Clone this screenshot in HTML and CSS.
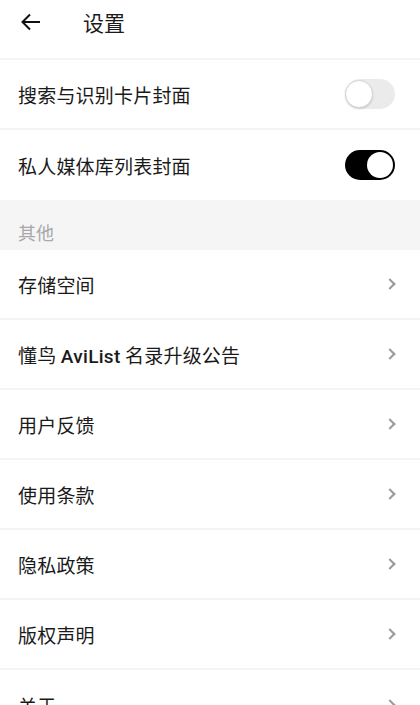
FILE: index.html
```html
<!DOCTYPE html>
<html lang="zh">
<head>
<meta charset="utf-8">
<link rel="stylesheet" href="styles.css">
</head>
<body>
<div class="page">
  <header class="topbar">
    <svg class="back" width="24" height="24" viewBox="0 0 24 24"><path d="M21 12H4M11 4.5L3.5 12 11 19.5" fill="none" stroke="#111" stroke-width="2"/></svg>
    <span class="title">设置</span>
  </header>
  <div class="row bordered"><span class="label">搜索与识别卡片封面</span><span class="switch"><span class="knob"></span></span></div>
  <div class="row"><span class="label">私人媒体库列表封面</span><span class="switch on"><span class="knob"></span></span></div>
  <div class="section">其他</div>
  <div class="row bordered"><span class="label">存储空间</span><span class="chev"></span></div>
  <div class="row bordered"><span class="label">懂鸟 <b class="latin">AviList</b> 名录升级公告</span><span class="chev"></span></div>
  <div class="row bordered"><span class="label">用户反馈</span><span class="chev"></span></div>
  <div class="row bordered"><span class="label">使用条款</span><span class="chev"></span></div>
  <div class="row bordered"><span class="label">隐私政策</span><span class="chev"></span></div>
  <div class="row bordered"><span class="label">版权声明</span><span class="chev"></span></div>
  <div class="row"><span class="label">关于</span><span class="chev"></span></div>
</div>
</body>
</html>
```
FILE: styles.css
```css
html, body { margin: 0; padding: 0; background: #fff; }
body { font-family: "Noto Sans CJK SC", "Noto Sans", sans-serif; color: #1a1a1a; overflow: hidden; }
.page { width: 420px; }
.topbar { height: 44px; padding-bottom: 14px; border-bottom: 2px solid #f4f4f4; display: flex; align-items: center; }
.back { margin-left: 19px; width: 24px; height: 24px; }
.title { margin-left: 40px; font-size: 21px; color: #1a1a1a; }
.row { height: 70px; box-sizing: border-box; display: flex; align-items: center; justify-content: space-between; padding: 0 22px 0 18px; }
.row.bordered { border-bottom: 2px solid #f4f4f4; }
.label { font-size: 19px; letter-spacing: 0.2px; }
.latin { font-family: "Roboto", "Noto Sans", sans-serif; font-weight: 500; letter-spacing: 0.3px; }
.section { height: 50px; box-sizing: border-box; background: #f5f5f5; color: #a8a8a8; font-size: 18px; padding: 20px 0 0 18px; line-height: 24px; }
.switch { width: 50px; height: 30px; box-sizing: border-box; border-radius: 15px; background: #ebebeb; position: relative; margin-right: 3px; }
.switch .knob { position: absolute; left: 0; top: 1px; width: 28px; height: 28px; box-sizing: border-box; border-radius: 50%; background: #fff; border: 1px solid #d6d6d6; box-shadow: 0 1px 2px rgba(0,0,0,0.15); }
.switch.on { background: #000; }
.switch.on .knob { left: auto; right: 2px; top: 2px; width: 26px; height: 26px; border: none; box-shadow: none; }
.chev { width: 6px; height: 6px; border-top: 2px solid #9a9a9a; border-right: 2px solid #9a9a9a; transform: rotate(45deg); margin-right: 4px; }
```
